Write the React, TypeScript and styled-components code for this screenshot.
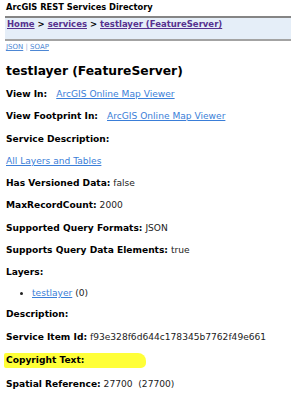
import styled, { createGlobalStyle } from "styled-components";

const Global = createGlobalStyle`
  body {
    margin: 0;
    background: #ffffff;
    font-family: "DejaVu Sans", Verdana, sans-serif;
    color: #000000;
  }
`;

const Page = styled.div`
  width: 294px;
`;

const Header = styled.div`
  font-size: 8.3px;
  font-weight: bold;
  padding: 0 6px;
  height: 16px;
  line-height: 15px;
`;

const Crumbs = styled.div`
  margin: 0 3px 0 5px;
  background: #e5eef8;
  border-top: 2px solid #858585;
  border-bottom: 2px solid #a3a3a3;
  height: 21px;
  line-height: 13px;
  padding: 0 2px;
  font-size: 8.5px;
  font-weight: bold;
  white-space: nowrap;
`;

const CrumbLink = styled.a`
  color: #56318f;
  text-decoration: underline;
`;

const Formats = styled.div`
  font-size: 7px;
  line-height: 9px;
  padding: 2px 6px 0;
  color: #9ab0d8;
  a {
    color: #4d87d4;
    text-decoration: underline;
  }
`;

const Title = styled.h2`
  margin: 10px 0 0 6px;
  font-size: 12.3px;
  font-weight: bold;
  line-height: 19px;
`;

const Row = styled.div<{ $top?: number }>`
  font-size: 9.1px;
  line-height: 12px;
  margin: ${(p) => p.$top ?? 10.3}px 0 0 6px;
  color: #222222;
  white-space: nowrap;
`;

const Label = styled.b`
  color: #000000;
`;

const Marked = styled.b`
  display: inline-block;
  color: #000000;
  background: #ffff38;
  line-height: 15px;
  margin-left: -2px;
  padding: 0 62px 0 2px;
  border-radius: 2px 8px 5px 2px;
`;

const Link = styled.a`
  color: #3a7ed8;
  text-decoration: underline;
`;

const Spaced = styled.span`
  margin-left: 9px;
`;

const Bullet = styled.ul`
  margin: 8.5px 0 0 0;
  padding-left: 32px;
  font-size: 9.1px;
  line-height: 12px;
  color: #222222;
  list-style: disc;
`;

export default function App() {
  return (
    <Page>
      <Global />
      <Header>ArcGIS REST Services Directory</Header>
      <Crumbs>
        <CrumbLink href="#">Home</CrumbLink> &gt; <CrumbLink href="#">services</CrumbLink> &gt;{" "}
        <CrumbLink href="#">testlayer (FeatureServer)</CrumbLink>
      </Crumbs>
      <Formats>
        <a href="#">JSON</a> | <a href="#">SOAP</a>
      </Formats>
      <Title>testlayer (FeatureServer)</Title>
      <Row $top={7}>
        <Label>View In:</Label>
        <Spaced>
          <Link href="#">ArcGIS Online Map Viewer</Link>
        </Spaced>
      </Row>
      <Row>
        <Label>View Footprint In:</Label>
        <Spaced>
          <Link href="#">ArcGIS Online Map Viewer</Link>
        </Spaced>
      </Row>
      <Row>
        <Label>Service Description:</Label>
      </Row>
      <Row>
        <Link href="#">All Layers and Tables</Link>
      </Row>
      <Row>
        <Label>Has Versioned Data:</Label> false
      </Row>
      <Row>
        <Label>MaxRecordCount:</Label> 2000
      </Row>
      <Row>
        <Label>Supported Query Formats:</Label> JSON
      </Row>
      <Row>
        <Label>Supports Query Data Elements:</Label> true
      </Row>
      <Row>
        <Label>Layers:</Label>
      </Row>
      <Bullet>
        <li>
          <Link href="#">testlayer</Link> (0)
        </li>
      </Bullet>
      <Row $top={9.5}>
        <Label>Description:</Label>
      </Row>
      <Row>
        <Label>Service Item Id:</Label> f93e328f6d644c178345b7762f49e661
      </Row>
      <Row>
        <Marked>Copyright Text:</Marked>
      </Row>
      <Row>
        <Label>Spatial Reference:</Label> 27700&nbsp;&nbsp;(27700)
      </Row>
    </Page>
  );
}
